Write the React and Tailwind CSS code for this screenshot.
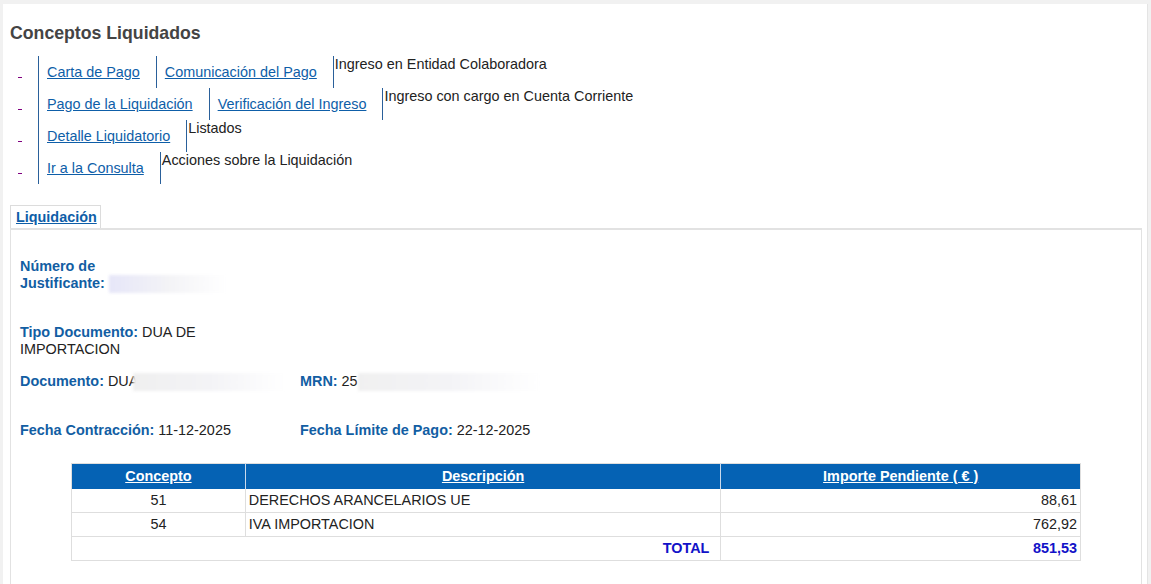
import React from 'react';

const menu = [
  { links: ['Carta de Pago', 'Comunicación del Pago'], text: 'Ingreso en Entidad Colaboradora' },
  { links: ['Pago de la Liquidación', 'Verificación del Ingreso'], text: 'Ingreso con cargo en Cuenta Corriente' },
  { links: ['Detalle Liquidatorio'], text: 'Listados' },
  { links: ['Ir a la Consulta'], text: 'Acciones sobre la Liquidación' },
];

const rows = [
  { concepto: '51', descripcion: 'DERECHOS ARANCELARIOS UE', importe: '88,61' },
  { concepto: '54', descripcion: 'IVA IMPORTACION', importe: '762,92' },
];

const Blur = ({ w, from }) => (
  <span className={`inline-block align-middle h-[18px] ${w} bg-gradient-to-r ${from} via-[#f3f3f6] to-white blur-[1.5px]`} />
);

const App = () => {
  return (
    <div className="min-h-[584px] bg-[#f1f1f1] px-[3px] pt-[4px] text-[14.4px] text-[#222] font-['Liberation_Sans',Arial,sans-serif]">
      <div className="bg-white min-h-[580px] pl-[7px] pr-[5px] pt-[19px] border-r border-[#e4e4e4]">
        <h1 className="text-[17.7px] leading-[20px] font-bold text-[#444]">Conceptos Liquidados</h1>

        <div className="mt-[13px]">
          {menu.map((row, i) => (
            <div key={i} className="flex h-8">
              <div className="w-[28px] pl-2 pt-[21px]">
                <span className="block w-[4px] h-px bg-[#800080]" />
              </div>
              <div className="flex border-l border-[#2a609a]">
                {row.links.map((l) => (
                  <a key={l} href="#" className="pl-2 pr-4 pt-[8px] leading-[16px] border-r border-[#2a609a] text-[#0e5ea8] underline whitespace-nowrap">
                    {l}
                  </a>
                ))}
                <span className="pl-[1px] leading-[16px] whitespace-nowrap">{row.text}</span>
              </div>
            </div>
          ))}
        </div>

        <div className="mt-[21px] flex">
          <div className="h-[23px] leading-[23px] pl-[5px] pr-[3px] border border-b-0 border-[#dcdcdc] font-bold text-[#0e5ea8] underline">
            Liquidación
          </div>
        </div>
        <div className="border-t-2 border-x border-[#e2e2e2] pl-[9px] pt-[28px] pb-[40px] leading-[17px]">
          <div>
            <span className="font-bold text-[#125ea3]">Número de<br />Justificante:</span>{' '}
            <Blur w="w-[117px]" from="from-[#e6e6f8]" />
          </div>

          <div className="mt-[31px]">
            <span className="font-bold text-[#125ea3]">Tipo Documento:</span> DUA DE<br />IMPORTACION
          </div>

          <div className="mt-[15px] grid grid-cols-[280px_1fr]">
            <div className="whitespace-nowrap">
              <span className="font-bold text-[#125ea3]">Documento:</span> DUA<Blur w="w-[152px] -ml-[5px]" from="from-[#efefef]" />
            </div>
            <div className="whitespace-nowrap">
              <span className="font-bold text-[#125ea3]">MRN:</span> 25<Blur w="w-[182px]" from="from-[#f0f0f0]" />
            </div>
          </div>

          <div className="mt-[31px] grid grid-cols-[280px_1fr]">
            <div>
              <span className="font-bold text-[#125ea3]">Fecha Contracción:</span> 11-12-2025
            </div>
            <div>
              <span className="font-bold text-[#125ea3]">Fecha Límite de Pago:</span> 22-12-2025
            </div>
          </div>

          <table className="mt-[24px] ml-[51px] w-[1010px] border-collapse border border-[#dedede]">
            <thead>
              <tr className="bg-[#0562b4] h-[25px]">
                <th className="w-[174px] border-r border-[#c9d9ec] text-white font-bold underline">Concepto</th>
                <th className="w-[476px] border-r border-[#c9d9ec] text-white font-bold underline">Descripción</th>
                <th className="w-[360px] text-white font-bold underline">Importe Pendiente ( € )</th>
              </tr>
            </thead>
            <tbody>
              {rows.map((r) => (
                <tr key={r.concepto} className="h-[24px] border-b border-[#dedede]">
                  <td className="text-center border-r border-[#dedede]">{r.concepto}</td>
                  <td className="pl-[3px] border-r border-[#dedede]">{r.descripcion}</td>
                  <td className="text-right pr-[3px]">{r.importe}</td>
                </tr>
              ))}
              <tr className="h-[24px]">
                <td colSpan={2} className="text-right pr-[11px] border-r border-[#dedede] font-bold text-[#1212c8]">TOTAL</td>
                <td className="text-right pr-[3px] font-bold text-[#1212c8]">851,53</td>
              </tr>
            </tbody>
          </table>
        </div>
      </div>
    </div>
  );
};

export default App;
